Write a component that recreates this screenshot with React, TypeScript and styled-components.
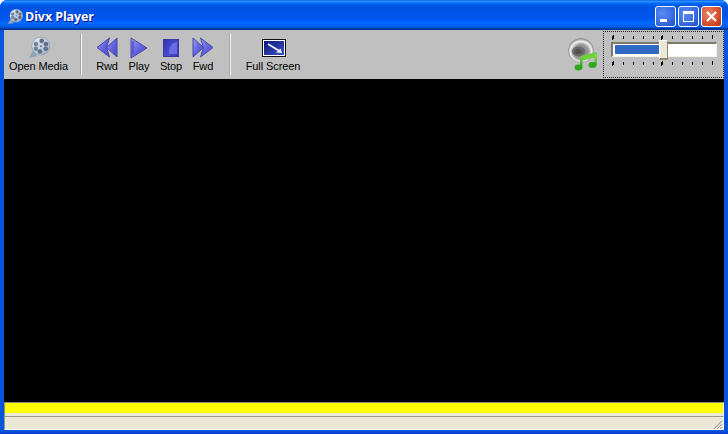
import React from 'react';
import styled, { createGlobalStyle } from 'styled-components';

const GlobalStyle = createGlobalStyle`
  html, body {
    margin: 0;
    padding: 0;
    background: #fff;
  }
  body {
    font-family: "Liberation Sans", Arial, sans-serif;
    overflow: hidden;
  }
`;

const Window = styled.div`
  width: 728px;
  height: 434px;
  display: flex;
  flex-direction: column;
  box-sizing: border-box;
  overflow: hidden;
  border-radius: 7px 7px 0 0;
  background: #0553e0;
`;

const TitleBar = styled.div`
  height: 30px;
  flex: none;
  display: flex;
  align-items: center;
  padding: 3px 6px 0 7px;
  box-sizing: border-box;
  background: linear-gradient(180deg, #0058ee 0%, #3593ff 4%, #288eff 6%, #127dff 8%, #036ffc 10%, #0262ee 14%, #0057e5 20%, #0054e3 24%, #0055eb 56%, #005bf5 66%, #026afe 76%, #0062ef 86%, #0052d6 92%, #0040ab 94%, #003092 100%);
`;

const TitleText = styled.span`
  margin-left: 2px;
  color: #fff;
  font-family: "Open Sans", sans-serif;
  font-weight: 700;
  font-size: 12.5px;
  letter-spacing: -0.1px;
  text-shadow: 1px 1px 0 #0f1089;
`;

const WindowButtons = styled.div`
  margin-left: auto;
  display: flex;
  gap: 2px;
`;

const WinButton = styled.div<{ $close?: boolean }>`
  width: 21px;
  height: 21px;
  box-sizing: border-box;
  border: 1px solid #fff;
  border-radius: 3px;
  display: flex;
  align-items: center;
  justify-content: center;
  background: ${p =>
    p.$close
      ? 'radial-gradient(circle at 35% 35%, #e9886c 0%, #d8532f 55%, #b03212 100%)'
      : 'radial-gradient(circle at 35% 35%, #5b8bf0 0%, #3a6de2 55%, #1f48c4 100%)'};
`;

const Frame = styled.div`
  flex: 1;
  min-height: 0;
  display: flex;
  flex-direction: column;
  padding: 0 4px 4px;
  background: linear-gradient(180deg, #0855dd 0, #0855dd 400px, #0a4fd0 402px, #0831d9 404px), linear-gradient(90deg, #0831d9 0, #166aee 2px, #0855dd 4px);
`;

const Toolbar = styled.div`
  height: 49px;
  flex: none;
  display: flex;
  align-items: stretch;
  background: #c0c0c0;
`;

const ToolGroup = styled.div`
  display: flex;
  align-items: stretch;
`;

const ToolButton = styled.div<{ $width: number }>`
  width: ${p => p.$width}px;
  display: flex;
  flex-direction: column;
  align-items: center;
  padding-top: 5px;
  box-sizing: border-box;
  font-size: 11px;
  line-height: 13px;
  letter-spacing: -0.1px;
  color: #000;
  white-space: nowrap;
`;

const IconSlot = styled.div`
  height: 25px;
  display: flex;
  align-items: center;
  justify-content: center;
`;

const Divider = styled.div<{ $before: number; $after: number }>`
  width: 2px;
  margin: 3px ${p => p.$after}px 4px ${p => p.$before}px;
  background: linear-gradient(90deg, #a6a6a6 0, #a6a6a6 1px, #f4f4f4 1px, #f4f4f4 2px);
`;

const VolumeArea = styled.div`
  margin-left: auto;
  display: flex;
  align-items: flex-start;
`;

const VolumeIcon = styled.div`
  width: 35px;
  margin-top: 8px;
  display: flex;
`;

const SliderPanel = styled.div`
  width: 121px;
  height: 47px;
  margin-top: 1px;
  box-sizing: border-box;
  border: 1px dotted #222;
  padding: 3px 6px 0 7px;
  display: flex;
  flex-direction: column;
`;

const TickRow = styled.div`
  display: flex;
  justify-content: space-between;
  height: 4px;
  padding: 0 4px 0 2px;
`;

const Tick = styled.span<{ $kind?: 'arrow' | 'long' }>`
  width: 1px;
  height: ${p => (p.$kind ? 4 : 3)}px;
  margin-top: ${p => (p.$kind ? 0 : 1)}px;
  background: #000;
  box-shadow: ${p => (p.$kind === 'arrow' ? '-1px 1px 0 #000' : 'none')};
`;

const Track = styled.div`
  position: relative;
  height: 15px;
  margin: 3px 0 4px;
  box-sizing: border-box;
  background: #fff;
  border-top: 2px solid #7d7868;
  border-left: 2px solid #7d7868;
  border-right: 1px solid #f5f3ea;
  border-bottom: 1px solid #f5f3ea;
  padding: 1px 0 2px 2px;
  display: flex;
`;

const TrackFill = styled.div`
  background: #316ac5;
  height: 100%;
`;

const Thumb = styled.div`
  position: absolute;
  top: -4px;
  left: 46px;
  width: 9px;
  height: 20px;
  box-sizing: border-box;
  background: #ebe8d8;
  border-top: 1px solid #fff;
  border-left: 1px solid #fff;
  border-right: 1px solid #8a8776;
  border-bottom: 2px solid #8a8776;
`;

const VideoArea = styled.div`
  flex: 1;
  min-height: 0;
  background: #000;
`;

const ProgressBar = styled.div`
  flex: none;
  background: #ebe8d8;
  border-top: 1px solid #8d8d85;
  border-left: 1px solid #8d8d85;
  border-right: 1px solid #f4f2e8;
  padding-bottom: 3px;
`;

const ProgressFill = styled.div`
  height: 10px;
  background: #ffff00;
`;

const StatusBar = styled.div`
  height: 12px;
  flex: none;
  position: relative;
  background: #ebe8d8;
  border-top: 1px solid #9c9a8c;
  border-left: 1px solid #9c9a8c;
  border-right: 1px solid #f4f2e8;
  border-bottom: 1px solid #fff;
`;

const Grip = styled.svg`
  position: absolute;
  right: 0;
  bottom: 0;
`;

const Defs = () => (
  <svg width="0" height="0" style={{ position: 'absolute' }}>
    <defs>
      <linearGradient id="media" x1="0" y1="0" x2="1" y2="1">
        <stop offset="0" stopColor="#a2a2f2" />
        <stop offset="0.5" stopColor="#6464e0" />
        <stop offset="1" stopColor="#4c4cc8" />
      </linearGradient>
      <linearGradient id="stop" x1="0" y1="0" x2="1" y2="1">
        <stop offset="0" stopColor="#3232b0" />
        <stop offset="0.55" stopColor="#4a4ad0" />
        <stop offset="1" stopColor="#3a3ab8" />
      </linearGradient>
      <linearGradient id="screen" x1="0" y1="0" x2="1" y2="1">
        <stop offset="0" stopColor="#0a1a7a" />
        <stop offset="1" stopColor="#3b4fc2" />
      </linearGradient>
      <linearGradient id="reel" x1="0" y1="0" x2="1" y2="1">
        <stop offset="0" stopColor="#eef2f8" />
        <stop offset="1" stopColor="#90a6c0" />
      </linearGradient>
      <radialGradient id="speaker" cx="0.5" cy="0.55" r="0.55">
        <stop offset="0" stopColor="#7a7a7a" />
        <stop offset="0.55" stopColor="#9a9a9a" />
        <stop offset="0.78" stopColor="#f0f0f0" />
        <stop offset="1" stopColor="#8c8c8c" />
      </radialGradient>
      <linearGradient id="note" x1="0" y1="0" x2="0" y2="1">
        <stop offset="0" stopColor="#8ae05a" />
        <stop offset="1" stopColor="#1f9a14" />
      </linearGradient>
    </defs>
  </svg>
);

const ReelIcon = ({ size }: { size: number }) => (
  <svg width={size} height={size} viewBox="0 0 24 24">
    <path d="M6 14 L1 23 L10 21 Z" fill="#8ea3bc" />
    <circle cx="14" cy="10" r="9.8" fill="url(#reel)" stroke="#7f95b0" strokeWidth="0.6" />
    <circle cx="15" cy="4.2" r="2.5" fill="#5f6f88" />
    <circle cx="13" cy="15.8" r="2.5" fill="#5f6f88" />
    <circle cx="8.6" cy="7.6" r="2.5" fill="#72829a" />
    <circle cx="19.6" cy="7.6" r="2.5" fill="#5f6f88" />
    <circle cx="8.6" cy="12.8" r="2.5" fill="#72829a" />
    <circle cx="19.4" cy="12.8" r="2.5" fill="#5f6f88" />
    <circle cx="14" cy="10" r="1" fill="#5f6f88" />
  </svg>
);

const RwdIcon = () => (
  <svg width="22" height="21" viewBox="0 0 22 21">
    <path d="M21 1 L10.5 10.5 L21 20 Z" fill="url(#media)" stroke="#4646ac" strokeLinejoin="round" />
    <path d="M13.5 1 L1 10.5 L13.5 20 L10.5 10.5 Z" fill="url(#media)" stroke="#4646ac" strokeLinejoin="round" />
  </svg>
);

const PlayIcon = () => (
  <svg width="20" height="24" viewBox="0 0 20 24">
    <path d="M2 2 L18 12 L2 22 Z" fill="url(#media)" stroke="#4646ac" strokeLinejoin="round" />
    <path d="M4 5 L4 18" stroke="#4a4ac8" strokeWidth="1.4" />
  </svg>
);

const StopIcon = () => (
  <svg width="16" height="18" viewBox="0 0 16 18">
    <rect x="0.5" y="0.5" width="15" height="17" fill="url(#stop)" stroke="#3a3a9e" />
    <path d="M6 15 C6 8 8 4 14 3 L14 15 Z" fill="#6a6ae4" />
  </svg>
);

const FwdIcon = () => (
  <svg width="22" height="21" viewBox="0 0 22 21">
    <path d="M1 1 L11.5 10.5 L1 20 Z" fill="url(#media)" stroke="#4646ac" strokeLinejoin="round" />
    <path d="M8.5 1 L21 10.5 L8.5 20 L11.5 10.5 Z" fill="url(#media)" stroke="#4646ac" strokeLinejoin="round" />
  </svg>
);

const FullScreenIcon = () => (
  <svg width="26" height="18" viewBox="0 0 26 18">
    <rect x="2.5" y="0.5" width="23" height="17" fill="#fff" stroke="#111" />
    <rect x="4" y="2" width="20" height="14" fill="url(#screen)" />
    <path d="M8 5 L21 13" stroke="#e8ecff" strokeWidth="2" />
    <path d="M16 13.5 L22 14 L20.5 9.5 Z" fill="#e8ecff" />
  </svg>
);

const SpeakerIcon = () => (
  <svg width="31" height="33" viewBox="0 0 31 33">
    <ellipse cx="13" cy="12.5" rx="12.5" ry="12" fill="url(#speaker)" stroke="#8a8a8a" strokeWidth="0.6" />
    <ellipse cx="10.5" cy="13.5" rx="6.5" ry="5" fill="#6a6a6a" />
    <ellipse cx="10" cy="13.5" rx="3.5" ry="2.6" fill="#525252" />
    <path d="M12.5 18 L29 14 L29 19 L12.5 23 Z" fill="#6fd03a" />
    <path d="M13.5 20 L13 30 M28 16 L27.5 27" stroke="url(#note)" strokeWidth="2.4" fill="none" />
    <ellipse cx="10.5" cy="29.5" rx="4" ry="3" fill="#2fa81e" />
    <ellipse cx="24.5" cy="27" rx="4" ry="3" fill="#2fa81e" />
  </svg>
);

const ticks: Array<'arrow' | 'long' | undefined> = ['arrow', undefined, undefined, undefined, undefined, 'arrow', undefined, undefined, undefined, undefined, 'long'];

const TickMarks = () => (
  <TickRow>
    {ticks.map((kind, i) => (
      <Tick key={i} $kind={kind} />
    ))}
  </TickRow>
);

const volume = 44;

const App: React.FC = () => {
  return (
    <Window>
      <GlobalStyle />
      <Defs />
      <TitleBar>
        <ReelIcon size={16} />
        <TitleText>Divx Player</TitleText>
        <WindowButtons>
          <WinButton>
            <svg width="13" height="13" viewBox="0 0 13 13">
              <rect x="1" y="9" width="7" height="3" fill="#fff" />
            </svg>
          </WinButton>
          <WinButton>
            <svg width="13" height="13" viewBox="0 0 13 13">
              <rect x="1.5" y="1.5" width="10" height="10" fill="none" stroke="#fff" />
              <rect x="1" y="1" width="11" height="3" fill="#fff" />
            </svg>
          </WinButton>
          <WinButton $close>
            <svg width="13" height="13" viewBox="0 0 13 13">
              <path d="M2 2 L11 11 M11 2 L2 11" stroke="#fff" strokeWidth="2.2" />
            </svg>
          </WinButton>
        </WindowButtons>
      </TitleBar>
      <Frame>
        <Toolbar>
          <ToolGroup>
            <ToolButton $width={69}>
              <IconSlot>
                <ReelIcon size={22} />
              </IconSlot>
              Open Media
            </ToolButton>
            <Divider $before={7} $after={9} />
          </ToolGroup>
          <ToolGroup>
            <ToolButton $width={32}>
              <IconSlot>
                <RwdIcon />
              </IconSlot>
              Rwd
            </ToolButton>
            <ToolButton $width={32}>
              <IconSlot>
                <PlayIcon />
              </IconSlot>
              Play
            </ToolButton>
            <ToolButton $width={32}>
              <IconSlot>
                <StopIcon />
              </IconSlot>
              Stop
            </ToolButton>
            <ToolButton $width={32}>
              <IconSlot>
                <FwdIcon />
              </IconSlot>
              Fwd
            </ToolButton>
            <Divider $before={10} $after={14} />
          </ToolGroup>
          <ToolGroup>
            <ToolButton $width={56}>
              <IconSlot>
                <FullScreenIcon />
              </IconSlot>
              Full Screen
            </ToolButton>
          </ToolGroup>
          <VolumeArea>
            <VolumeIcon>
              <SpeakerIcon />
            </VolumeIcon>
            <SliderPanel>
              <TickMarks />
              <Track>
                <TrackFill style={{ width: `${volume}%` }} />
                <Thumb />
              </Track>
              <TickMarks />
            </SliderPanel>
          </VolumeArea>
        </Toolbar>
        <VideoArea />
        <ProgressBar>
          <ProgressFill />
        </ProgressBar>
        <StatusBar>
          <Grip width="10" height="8" viewBox="0 0 10 8">
            <path d="M9 0 L1 8 M9 3 L4 8 M9 6 L7 8" stroke="#a8a594" strokeWidth="1.2" />
            <path d="M9 1.5 L2.5 8 M9 4.5 L5.5 8" stroke="#fff" strokeWidth="0.9" />
          </Grip>
        </StatusBar>
      </Frame>
    </Window>
  );
};

export default App;
